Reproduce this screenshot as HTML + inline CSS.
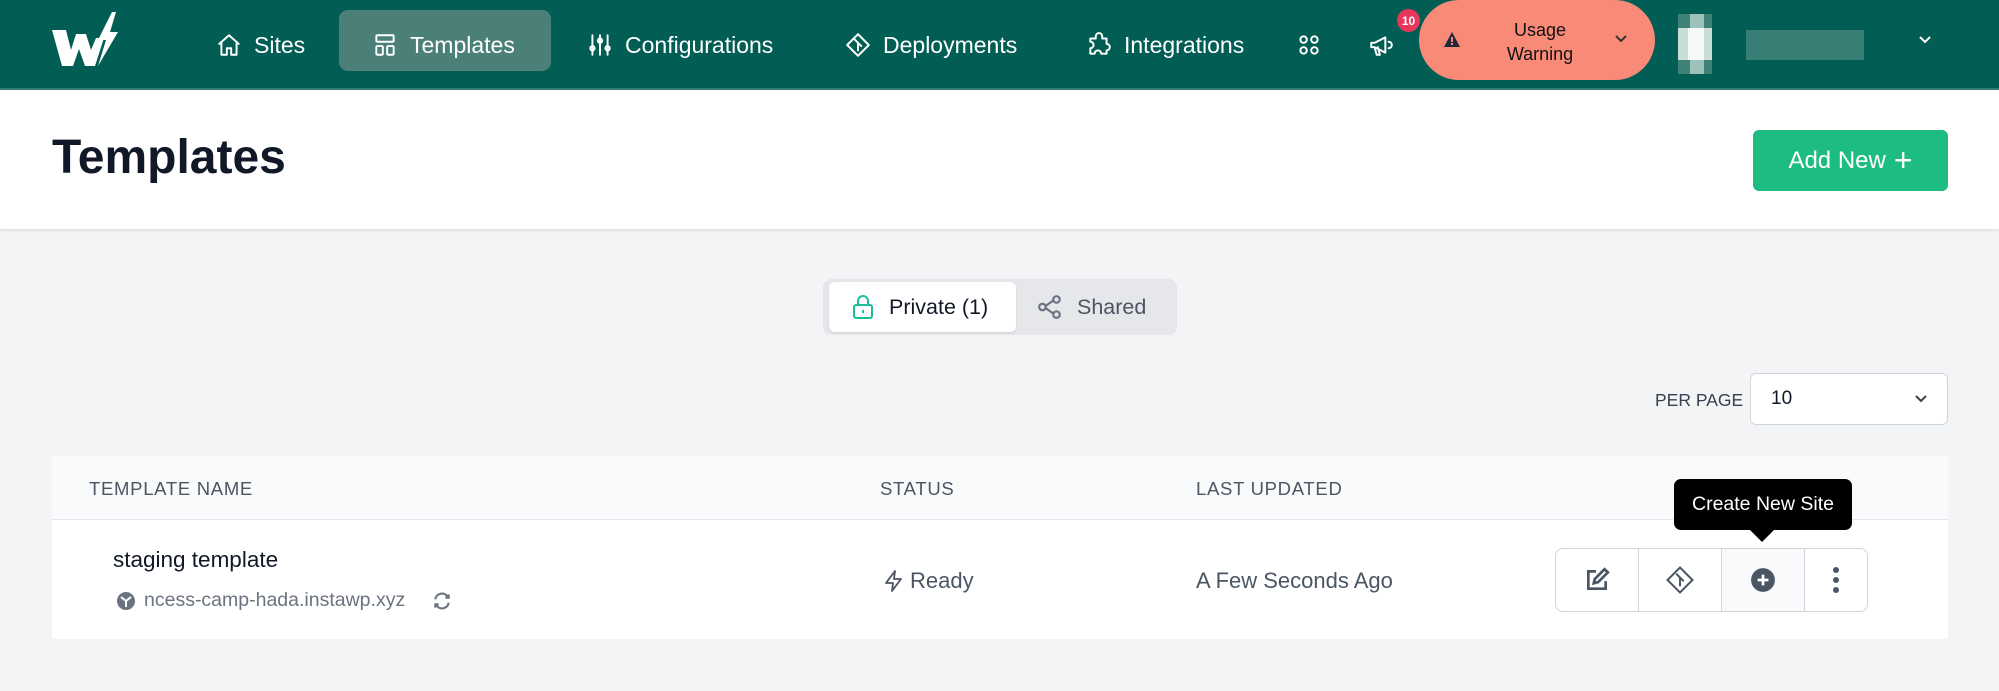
<!DOCTYPE html>
<html><head><meta charset="utf-8"><style>
*{box-sizing:border-box;margin:0;padding:0}
body{width:1999px;height:691px;background:#f3f4f6;font-family:"Liberation Sans",sans-serif;position:relative;overflow:hidden;color:#111827}
.a{position:absolute}
.nav{left:0;top:0;width:1999px;height:90px;background:#025e54;border-bottom:2px solid #2f7d74}
.ni{position:absolute;top:0;height:90px;display:flex;align-items:center;color:#fff;font-size:23px;gap:12px}
.ni svg{width:26px;height:26px;fill:none;stroke:#fff;stroke-width:1.8;stroke-linecap:round;stroke-linejoin:round}
.hdr{left:0;top:90px;width:1999px;height:139px;background:#fff;box-shadow:0 2px 3px rgba(0,0,0,.08)}
.th{font-size:18.5px;color:#4b5563;letter-spacing:.7px;top:478px}
</style></head><body>
<div class="a nav"></div>
<svg class="a" style="left:50px;top:12px" width="72" height="56" viewBox="0 0 72 56"><path d="M2 18h14l5 20 5-16h10l5 16 5-12h8l-9 28h-10l-6-17-6 17h-11z" fill="#fff"/><path d="M62 0 L48 28 h8 l-8 26 l20-34 h-8 l6-20z" fill="#fff"/></svg>
<div class="a" style="left:339px;top:10px;width:212px;height:61px;background:#4a8078;border-radius:9px"></div>
<div class="ni" style="left:216px"><svg viewBox="0 0 24 24"><path d="M3 11l9-8 9 8M5 9v12h5v-6h4v6h5V9"/></svg>Sites</div>
<div class="ni" style="left:372px"><svg viewBox="0 0 24 24"><rect x="4" y="3" width="16" height="6" rx="1"/><rect x="4" y="13" width="6" height="8" rx="1"/><rect x="14" y="13" width="6" height="8" rx="1"/></svg>Templates</div>
<div class="ni" style="left:587px"><svg viewBox="0 0 24 24"><path d="M5 3v18M12 3v18M19 3v18"/><circle cx="5" cy="15" r="2"/><circle cx="12" cy="8" r="2"/><circle cx="19" cy="15" r="2"/></svg>Configurations</div>
<div class="ni" style="left:845px"><svg viewBox="0 0 24 24"><path d="M12 2l10 10-10 10L2 12z M9 7l3 3v7 M12 10l3 3"/></svg>Deployments</div>
<div class="ni" style="left:1086px"><svg viewBox="0 0 24 24"><path d="M9 4a3 3 0 016 0v2h4v5a3 3 0 010 6v3h-5a3 3 0 00-6 0H4v-5a3 3 0 000-6V6h5z"/></svg>Integrations</div>
<div class="ni" style="left:1296px"><svg viewBox="0 0 24 24"><circle cx="7" cy="7" r="3"/><circle cx="17" cy="7" r="3"/><circle cx="7" cy="17" r="3"/><circle cx="17" cy="17" r="3"/></svg></div>
<div class="ni" style="left:1368px"><svg viewBox="0 0 24 24"><path d="M3 10v4h3l10 5V5L6 10zM6 14l2 7h3l-2-7M19 9a3 3 0 010 6"/></svg></div>
<div class="a" style="left:1397px;top:9px;width:23px;height:23px;border-radius:50%;background:#e8365d;color:#fff;font-size:12px;font-weight:bold;display:flex;align-items:center;justify-content:center">10</div>
<div class="a" style="left:1419px;top:0;width:236px;height:80px;background:#fa8a78;border-radius:40px"></div>
<svg class="a" style="left:1443px;top:31px" width="18" height="18" viewBox="0 0 18 18"><path d="M9 1L17 16H1z" fill="#1f2937"/><rect x="8" y="6" width="2" height="5" fill="#fa8a78"/><rect x="8" y="12" width="2" height="2" fill="#fa8a78"/></svg>
<div class="a" style="left:1490px;top:18px;width:100px;text-align:center;font-size:18px;line-height:24px;color:#111">Usage<br>Warning</div>
<svg class="a" style="left:1614px;top:34px" width="14" height="10" viewBox="0 0 14 10"><path d="M2 2l5 5 5-5" stroke="#333" stroke-width="2" fill="none"/></svg>
<div class="a" style="left:1678px;top:14px;width:34px;height:60px;background:#3f8278"></div>
<div class="a" style="left:1690px;top:14px;width:14px;height:60px;background:#9cc2bb"></div>
<div class="a" style="left:1678px;top:28px;width:34px;height:32px;background:#c8dcd8"></div>
<div class="a" style="left:1688px;top:28px;width:16px;height:32px;background:#f4f8f7"></div>
<div class="a" style="left:1746px;top:30px;width:118px;height:30px;background:#3a7f75"></div>
<svg class="a" style="left:1918px;top:35px" width="14" height="10" viewBox="0 0 14 10"><path d="M2 2l5 5 5-5" stroke="#fff" stroke-width="2" fill="none"/></svg>

<div class="a hdr"></div>
<div class="a" style="left:52px;top:130px;font-size:48px;font-weight:bold;color:#111827">Templates</div>
<div class="a" style="left:1753px;top:130px;width:195px;height:61px;background:#1dbc80;border-radius:6px;color:#fff;font-size:24px;display:flex;align-items:center;justify-content:center;gap:8px">Add New <span style="font-size:32px;font-weight:300">+</span></div>

<div class="a" style="left:823px;top:279px;width:354px;height:56px;background:#e5e7eb;border-radius:8px"></div>
<div class="a" style="left:829px;top:282px;width:187px;height:50px;background:#fff;border-radius:6px;box-shadow:0 1px 2px rgba(0,0,0,.1);display:flex;align-items:center;gap:14px;padding-left:22px;font-size:21.5px;color:#111827"><svg width="24" height="26" viewBox="0 0 24 26" fill="none" stroke="#1dbc9a" stroke-width="2"><rect x="3" y="11" width="18" height="13" rx="2"/><path d="M7 11V7a5 5 0 0110 0v4M12 16v3"/></svg>Private (1)</div>
<div class="a" style="left:1037px;top:282px;height:50px;display:flex;align-items:center;gap:14px;font-size:21.5px;color:#4b5563"><svg width="26" height="26" viewBox="0 0 24 24" fill="none" stroke="#6b7280" stroke-width="2"><circle cx="5" cy="12" r="3"/><circle cx="18" cy="5" r="3"/><circle cx="18" cy="19" r="3"/><path d="M8 11l7-5M8 13l7 5"/></svg>Shared</div>

<div class="a" style="left:1655px;top:390px;font-size:17.5px;color:#374151">PER PAGE</div>
<div class="a" style="left:1750px;top:373px;width:198px;height:52px;background:#fff;border:1px solid #d1d5db;border-radius:6px;font-size:19px;padding:14px 0 0 20px">10</div>
<svg class="a" style="left:1914px;top:394px" width="14" height="10" viewBox="0 0 14 10"><path d="M2 2l5 5 5-5" stroke="#374151" stroke-width="2" fill="none"/></svg>

<div class="a" style="left:52px;top:456px;width:1896px;height:64px;background:#f9fafb;border-bottom:1px solid #e5e7eb"></div>
<div class="a" style="left:52px;top:520px;width:1896px;height:119px;background:#fff"></div>
<div class="a th" style="left:89px">TEMPLATE NAME</div>
<div class="a th" style="left:880px">STATUS</div>
<div class="a th" style="left:1196px">LAST UPDATED</div>
<div class="a" style="left:113px;top:547px;font-size:22.5px;color:#111827">staging template</div>
<svg class="a" style="left:116px;top:591px" width="20" height="20" viewBox="0 0 20 20"><circle cx="10" cy="10" r="9" fill="#6b7280"/><path d="M5 6l5 4 5-4M10 10v6" stroke="#fff" stroke-width="2" fill="none"/></svg>
<div class="a" style="left:144px;top:589px;font-size:19.5px;color:#6b7280">ncess-camp-hada.instawp.xyz</div>
<svg class="a" style="left:432px;top:591px" width="20" height="20" viewBox="0 0 24 24" fill="none" stroke="#6b7280" stroke-width="2.5"><path d="M4 10a8 8 0 0114-4l2 2M20 4v4h-4M20 14a8 8 0 01-14 4l-2-2M4 20v-4h4"/></svg>
<svg class="a" style="left:882px;top:568px" width="24" height="26" viewBox="0 0 24 24" fill="none" stroke="#4b5563" stroke-width="1.8" stroke-linejoin="round"><path d="M13 2L4 14h7l-1 8 9-12h-7z"/></svg>
<div class="a" style="left:910px;top:568px;font-size:22px;color:#4b5563">Ready</div>
<div class="a" style="left:1196px;top:568px;font-size:22px;color:#4b5563">A Few Seconds Ago</div>

<div class="a" style="left:1555px;top:548px;width:313px;height:64px;border:1.5px solid #d1d5db;border-radius:8px;background:#fff;display:flex;overflow:hidden">
<div style="width:83px;border-right:1.5px solid #d1d5db;display:flex;align-items:center;justify-content:center"><svg width="26" height="26" viewBox="0 0 24 24" fill="none" stroke="#4b5563" stroke-width="2.5"><path d="M11 4H4v16h16v-7M9 15l1-4 9-9 3 3-9 9z"/></svg></div>
<div style="width:83px;border-right:1.5px solid #d1d5db;display:flex;align-items:center;justify-content:center"><svg width="30" height="30" viewBox="0 0 24 24" fill="none" stroke="#4b5563" stroke-width="1.6"><path d="M12 2l10 10-10 10L2 12z M9 7l3 3v7 M12 10l3 3"/></svg></div>
<div style="width:83px;border-right:1.5px solid #d1d5db;background:#f9fafb;display:flex;align-items:center;justify-content:center"><svg width="26" height="26" viewBox="0 0 24 24"><circle cx="12" cy="12" r="11" fill="#4b5563"/><path d="M12 7v10M7 12h10" stroke="#fff" stroke-width="2.5"/></svg></div>
<div style="flex:1;display:flex;align-items:center;justify-content:center"><svg width="8" height="28" viewBox="0 0 8 28" fill="#4b5563"><circle cx="4" cy="4" r="3"/><circle cx="4" cy="14" r="3"/><circle cx="4" cy="24" r="3"/></svg></div>
</div>
<div class="a" style="left:1674px;top:479px;width:178px;height:51px;background:#000;border-radius:7px;color:#fff;font-size:19.5px;display:flex;align-items:center;justify-content:center">Create New Site</div>
<div class="a" style="left:1750px;top:530px;width:0;height:0;border-left:12px solid transparent;border-right:12px solid transparent;border-top:12px solid #000"></div>
</body></html>
